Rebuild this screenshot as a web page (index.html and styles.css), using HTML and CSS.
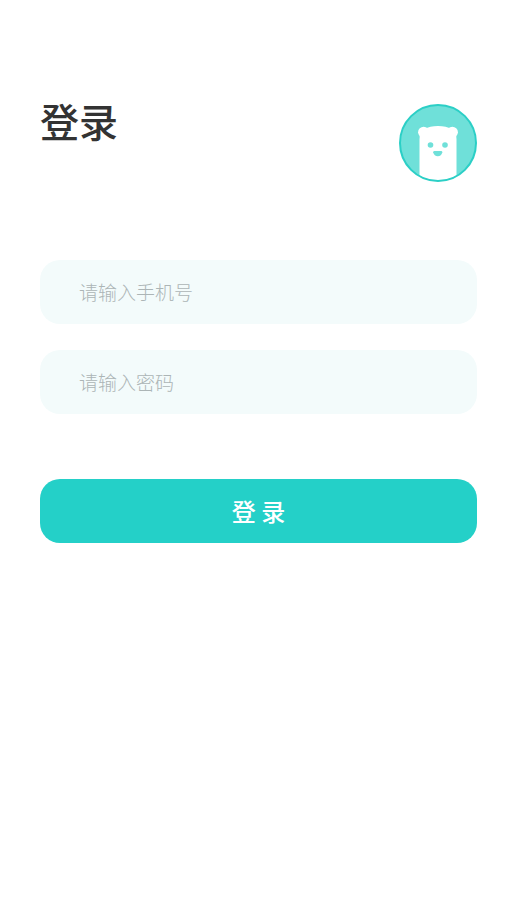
FILE: index.html
```html
<!DOCTYPE html>
<html lang="zh-CN">
<head>
<meta charset="utf-8">
<meta name="viewport" content="width=device-width, initial-scale=1">
<title>登录</title>
<link rel="stylesheet" href="styles.css">
</head>
<body>
<main class="login">
  <header class="login-header">
    <h1 class="title">登录</h1>
    <svg class="avatar" viewBox="0 0 78 78" aria-hidden="true">
      <defs><clipPath id="disc"><circle cx="39" cy="39" r="37.5"/></clipPath></defs>
      <circle cx="39" cy="39" r="38" fill="#6fe0d9"/>
      <g clip-path="url(#disc)" fill="#fff">
        <circle cx="24.7" cy="28.3" r="5.6"/>
        <circle cx="53.3" cy="28.3" r="5.6"/>
        <path d="M20.5 80V35C20.5 26 28 22 39 22S57.5 26 57.5 35V80Z"/>
      </g>
      <g fill="#6fe0d9">
        <circle cx="31.5" cy="41" r="2.8"/>
        <circle cx="46" cy="41" r="2.8"/>
        <path d="M35.5 47h6.5q1.5 0 1.3 1.2-.8 4-4.500 4t-4.600-4q-.1-1.200 1.300-1.200z"/>
      </g>
      <circle cx="39" cy="39" r="38" fill="none" stroke="#2bcfc6" stroke-width="2"/>
    </svg>
  </header>
  <form class="form">
    <input class="field" type="tel" placeholder="请输入手机号" aria-label="手机号">
    <input class="field" type="password" placeholder="请输入密码" aria-label="密码">
    <button class="submit" type="button">登 录</button>
  </form>
</main>
</body>
</html>
```
FILE: styles.css
```css
* { box-sizing: border-box; }
body {
  margin: 0;
  background: #fff;
  font-family: "Noto Sans CJK SC", sans-serif;
}
.login { padding: 92px 30px 40px 40px; }
.login-header {
  display: flex;
  justify-content: space-between;
  align-items: flex-start;
}
.title {
  margin: 0;
  color: #333;
  font-size: 39px;
  line-height: 56px;
  font-weight: 500;
}
.avatar { width: 78px; height: 78px; margin-top: 12px; }
.form {
  display: flex;
  flex-direction: column;
  gap: 26px;
  margin-top: 78px;
}
.field {
  width: 100%;
  height: 64px;
  padding: 0 39px 2px;
  border: 0;
  border-radius: 20px;
  background: #f3fbfb;
  color: #333;
  font: inherit;
  font-size: 19px;
  font-weight: 300;
}
.field::placeholder { color: #acb5b6; opacity: 1; }
.submit {
  height: 64px;
  margin-top: 39px;
  padding: 0 0 2px;
  border: 0;
  border-radius: 20px;
  background: #24d0c8;
  color: #fff;
  font: inherit;
  font-size: 24px;
  font-weight: 500;
}
```
